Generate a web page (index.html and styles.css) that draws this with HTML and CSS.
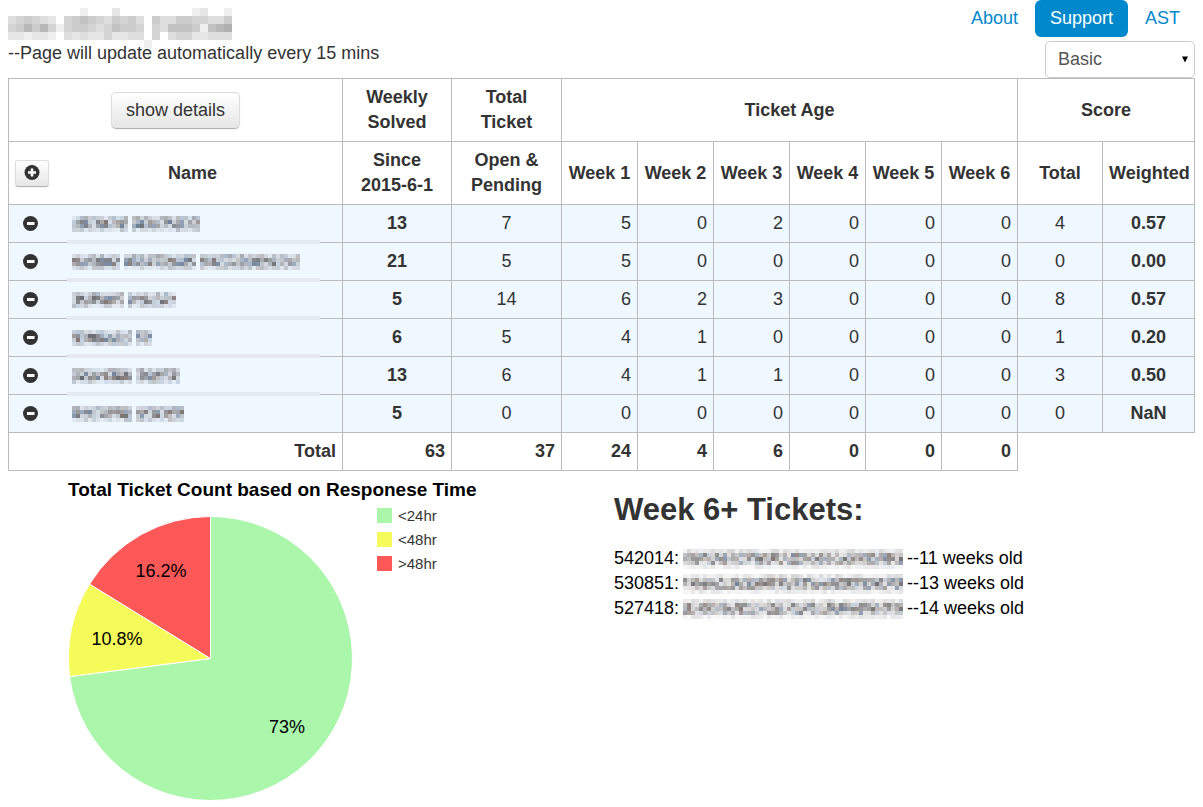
FILE: index.html
```html
<!DOCTYPE html>
<html lang="en">
<head>
<meta charset="utf-8">
<meta name="viewport" content="width=device-width, initial-scale=1">
<title>Support stats</title>
<link rel="stylesheet" href="styles.css">
</head>
<body>
<svg class="defs" width="0" height="0" aria-hidden="true">
  <symbol id="minus" viewBox="0 0 16 16"><circle cx="7.500" cy="7.500" r="7.500" fill="#333"/><path d="M4 6h7.500v3H4z" fill="#fff"/></symbol>
  <symbol id="plus" viewBox="0 0 16 16"><circle cx="8" cy="7.500" r="7.500" fill="#333"/><path d="M6.700 3.500h2.600v2.700H12v2.600H9.300v2.700H6.700V8.800H4V6.200h2.700z" fill="#fff"/></symbol>
</svg>

<header class="top">
  <div class="intro">
    <h1 class="brand"><span class="mosaic" data-title role="img" aria-label="Hidden title"></span></h1>
    <p class="note">--Page will update automatically every 15 mins</p>
  </div>
  <div class="controls">
    <nav class="pills">
      <a href="#about">About</a>
      <a href="#support" class="active" aria-current="page">Support</a>
      <a href="#ast">AST</a>
    </nav>
    <div class="picker">
      <select class="mode" aria-label="View mode"><option>Basic</option><option>Advanced</option></select>
      <svg class="caret" viewBox="0 0 6 7" aria-hidden="true"><path d="M0 0.500h6L3 6.500z" fill="#000"/></svg>
    </div>
  </div>
</header>

<main>
  <table class="stats">
    <colgroup>
      <col><col class="c-solved"><col class="c-open">
      <col class="c-week"><col class="c-week"><col class="c-week"><col class="c-week"><col class="c-week"><col class="c-week">
      <col class="c-score"><col class="c-weighted">
    </colgroup>
    <thead>
      <tr>
        <th><button type="button" class="btn">show details</button></th>
        <th>Weekly Solved</th>
        <th>Total<br>Ticket</th>
        <th colspan="6">Ticket Age</th>
        <th colspan="2">Score</th>
      </tr>
      <tr>
        <th><div class="name-head"><button type="button" class="btn small" aria-label="Add person"><svg class="icon"><use href="#plus"/></svg></button><span>Name</span></div></th>
        <th>Since<br>2015-6-1</th>
        <th>Open &amp; Pending</th>
        <th>Week 1</th><th>Week 2</th><th>Week 3</th><th>Week 4</th><th>Week 5</th><th>Week 6</th>
        <th>Total</th><th>Weighted</th>
      </tr>
    </thead>
    <tbody id="people"></tbody>
    <tfoot>
      <tr>
        <th>Total</th><td>63</td><td>37</td><td>24</td><td>4</td><td>6</td><td>0</td><td>0</td><td>0</td>
      </tr>
    </tfoot>
  </table>

  <div class="panels">
    <svg class="chart" viewBox="0 0 581 330" role="img" aria-label="Ticket count by response time">
      <text class="chart-title" x="60" y="25">Total Ticket Count based on Responese Time</text>
      <g class="slices">
        <path fill="#aaf6aa" d="M202.500 187.500V45.500A142 142 0 1 1 61.650 205.540Z"/>
        <path fill="#f5fb58" d="M202.500 187.500L61.650 205.540A142 142 0 0 1 81.600 113.100Z"/>
        <path fill="#fc5858" d="M202.500 187.500L81.600 113.100A142 142 0 0 1 202.500 45.500Z"/>
      </g>
      <g class="slice-label">
        <text x="279" y="262">73%</text>
        <text x="109" y="174">10.8%</text>
        <text x="153" y="106">16.2%</text>
      </g>
      <g class="legend">
        <rect x="369" y="37" width="15" height="15" fill="#aaf6aa"/><text x="390" y="50">&lt;24hr</text>
        <rect x="369" y="61" width="15" height="15" fill="#f5fb58"/><text x="390" y="74">&lt;48hr</text>
        <rect x="369" y="85" width="15" height="15" fill="#fc5858"/><text x="390" y="98">&gt;48hr</text>
      </g>
    </svg>

    <section class="old">
      <h2>Week 6+ Tickets:</h2>
      <ul>
        <li>542014: <span class="mosaic" data-words="55" data-rows="5" role="img" aria-label="Hidden address"></span> --11 weeks old</li>
        <li>530851: <span class="mosaic" data-words="55" data-rows="5" role="img" aria-label="Hidden address"></span> --13 weeks old</li>
        <li>527418: <span class="mosaic" data-words="55" data-rows="5" role="img" aria-label="Hidden address"></span> --14 weeks old</li>
      </ul>
    </section>
  </div>
</main>
<script src="app.js"></script>
</body>
</html>
```

FILE: styles.css
```css
* { box-sizing: border-box; }

body {
  margin: 0 8px;
  background: #fff;
  color: #333;
  font: 18px/25px "Liberation Sans", Arial, sans-serif;
}

.defs { position: absolute; }
h1, h2, p, ul { margin: 0; padding: 0; }
button, select { font: inherit; color: inherit; }

.top { display: flex; justify-content: space-between; }
.intro { padding-top: 8px; }
.brand { height: 33px; line-height: 0; }

.controls { display: flex; flex-direction: column; align-items: flex-end; gap: 4px; }
.pills { display: flex; gap: 2px; }
.pills a {
  padding: 6px 15px;
  border-radius: 6px;
  color: #08c;
  text-decoration: none;
}
.pills .active { background: #08c; color: #fff; }

.picker { position: relative; width: 150px; height: 37px; }
.mode {
  appearance: none;
  width: 100%;
  height: 100%;
  padding: 0 12px;
  border: 1px solid #ccc;
  border-radius: 5px;
  background: #fff;
  color: #555;
}
.caret { position: absolute; right: 7px; top: 15px; width: 6px; height: 7px; pointer-events: none; }

.stats { width: 100%; table-layout: fixed; border-collapse: collapse; }
.stats th, .stats td { padding: 6px; border: 1px solid #bbb; }
.c-solved { width: 109px; }
.c-open { width: 110px; }
.c-week { width: 76px; }
.c-score { width: 85px; }
.c-weighted { width: 92px; }
.stats tbody { background: #eff7ff; }
.stats tbody td { text-align: right; }
.stats tbody .mid { text-align: center; }
.stats tbody .strong { text-align: center; font-weight: bold; }
.stats tfoot th, .stats tfoot td { text-align: right; font-weight: bold; }

.btn {
  height: 37px;
  padding: 0 14px;
  border: 1px solid #ddd;
  border-bottom-color: #b3b3b3;
  border-radius: 5px;
  background: linear-gradient(#fff, #e6e6e6);
  box-shadow: 0 1px 2px rgba(0, 0, 0, .05);
  font-weight: normal;
  vertical-align: middle;
}
.btn.small { height: 27px; padding: 0 8px; border-radius: 3px; }
.icon { display: block; width: 16px; height: 16px; }
.name-head { display: flex; align-items: center; }
.name-head span { flex: 1; }

.person { position: relative; display: flex; align-items: center; height: 25px; padding-left: 8px; }
.bare { padding: 0; border: 0; background: none; }
.person .mosaic { margin-left: 33px; }
.person::after {
  content: "";
  position: absolute;
  left: 52px;
  right: 16px;
  bottom: -8px;
  height: 4px;
  background: #e5eaf2;
}
tr:last-child .person::after { display: none; }

.mosaic { display: inline-block; line-height: 0; }
.mosaic svg { display: block; overflow: visible; }

.panels { display: grid; grid-template-columns: 1fr 1fr; gap: 25px; }
.chart { display: block; width: 100%; }
.chart-title { font-size: 19px; font-weight: bold; fill: #000; }
.slices path { stroke: #fff; stroke-width: 1px; }
.slice-label { font-size: 18px; text-anchor: middle; fill: #000; }
.legend { font-size: 15px; fill: #333; }

.old { color: #000; }
.old h2 { padding: 14px 0 11px; color: #333; font-size: 31px; line-height: 50px; }
.old ul { list-style: none; }
.old .mosaic { height: 20px; margin: 0 -1px; vertical-align: middle; }
```

FILE: app.js
```js
// Hidden text is drawn as a mosaic of grey cells.
const TITLE = [
  "0000000001000200000000012001",
  "3454320456543545305335544335",
  "4575741455434655404366651678",
  "2212210323224223304034422333",
  "0000000000000000010000000000"
];

function svg(cols, rows, size, shade) {
  let out = "";
  for (let y = 0; y < rows; y++)
    for (let x = 0; x < cols; x++) {
      const fill = shade(x, y);
      if (fill) out += `<rect x="${x * size}" y="${y * size}" width="${size}" height="${size}" fill="${fill}"/>`;
    }
  return `<svg width="${cols * size}" height="${rows * size}" shape-rendering="crispEdges">${out}</svg>`;
}

function noise(words, rows, seed) {
  const gaps = new Set();
  let cols = 0;
  words.forEach((w, i) => {
    cols += w;
    if (i < words.length - 1) gaps.add(cols++);
  });
  const edge = rows === 5 ? [0.3, 0.9, 1, 0.8, 0.2] : [0.55, 1, 1, 0.4];
  const tints = ["90,75,70", "70,90,120", "75,75,75", "60,60,65"];
  let s = seed;
  const next = () => (s = (s * 48271) % 2147483647) / 2147483647;
  return svg(cols, rows, 4, (x, y) => {
    const a = (0.15 + 0.6 * next()) * edge[y];
    const tint = tints[Math.floor(next() * tints.length)];
    return gaps.has(x) ? null : `rgba(${tint},${a.toFixed(2)})`;
  });
}

const people = [
  { words: "14,17", v: ["13", 7, 5, 0, 2, 0, 0, 0, 4, "0.57"] },
  { words: "12,18,25", v: ["21", 5, 5, 0, 0, 0, 0, 0, 0, "0.00"] },
  { words: "13,12", v: ["5", 14, 6, 2, 3, 0, 0, 0, 8, "0.57"] },
  { words: "15,4", v: ["6", 5, 4, 1, 0, 0, 0, 0, 1, "0.20"] },
  { words: "15,11", v: ["13", 6, 4, 1, 1, 0, 0, 0, 3, "0.50"] },
  { words: "15,12", v: ["5", 0, 0, 0, 0, 0, 0, 0, 0, "NaN"] }
];

document.getElementById("people").innerHTML = people.map(p => {
  const cells = p.v.map((n, i) => {
    const cls = i === 0 || i === 9 ? "strong" : i === 1 || i === 8 ? "mid" : "";
    return `<td class="${cls}">${n}</td>`;
  }).join("");
  return `<tr><td><div class="person"><button type="button" class="bare" aria-label="Remove person"><svg class="icon"><use href="#minus"/></svg></button><span class="mosaic" data-words="${p.words}" data-rows="4" role="img" aria-label="Hidden name"></span></div></td>${cells}</tr>`;
}).join("");

document.querySelectorAll("[data-words]").forEach((el, i) => {
  el.innerHTML = noise(el.dataset.words.split(",").map(Number), +el.dataset.rows, 97 + i * 7919);
});

document.querySelector("[data-title]").innerHTML = svg(28, 5, 8, (x, y) => {
  const n = +TITLE[y][x];
  const g = 248 - n * 9;
  return n ? `rgb(${g},${g},${g})` : null;
});
```
